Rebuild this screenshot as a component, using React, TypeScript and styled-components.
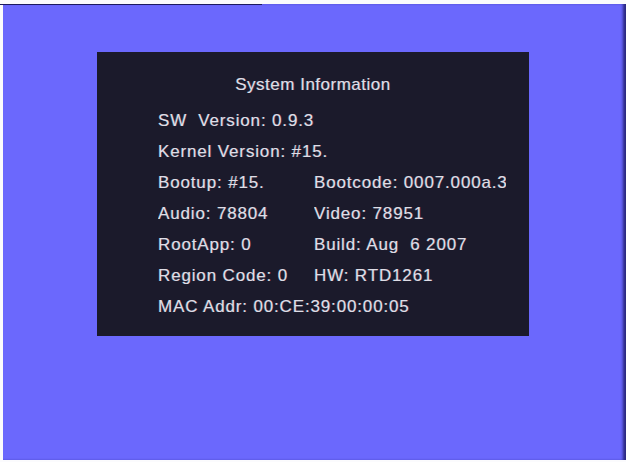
import React from "react";
import styled, { createGlobalStyle } from "styled-components";

const Global = createGlobalStyle`
  html, body { margin: 0; padding: 0; background: #fbfbfd; }
  body { width: 626px; height: 462px; overflow: hidden; }
`;

const Page = styled.div`
  width: 626px;
  height: 462px;
  box-sizing: border-box;
  padding: 4px 0 2px 3px;
  background: #fbfbfd;
`;

const Screen = styled.div`
  position: relative;
  height: 100%;
  box-sizing: border-box;
  background: #6b68fd;
  padding: 48px 0 0 94px;
  box-shadow: inset -4px 0 3px -1px #2a2880;
  &::before {
    content: "";
    position: absolute;
    left: -3px;
    top: 0;
    width: 262px;
    height: 1px;
    background: #1c1a60;
  }
`;

const Panel = styled.div`
  width: 432px;
  height: 284px;
  box-sizing: border-box;
  background: #1b1a2b;
  padding: 17px 0 0 61px;
  display: flex;
  flex-direction: column;
  font-family: "Liberation Sans", Arial, sans-serif;
  font-size: 17px;
  letter-spacing: 0.85px;
  color: #dedde6;
  text-shadow: 0.6px 0 0 rgba(255, 120, 200, 0.35), -0.6px 0 0 rgba(120, 255, 200, 0.3);
`;

const Title = styled.div`
  height: 31px;
  line-height: 31px;
  margin: 0 0 5px -61px;
  text-align: center;
  white-space: nowrap;
  letter-spacing: 0.5px;
`;

const Row = styled.div`
  display: grid;
  grid-template-columns: 156px 192px;
  height: 31px;
  line-height: 31px;
  white-space: pre;
`;

const Cell = styled.span<{ $wide?: boolean }>`
  overflow: ${(p) => (p.$wide ? "visible" : "hidden")};
  grid-column: ${(p) => (p.$wide ? "1 / span 2" : "auto")};
  white-space: pre;
`;

const rows: [string, string?][] = [
  ["SW  Version: 0.9.3"],
  ["Kernel Version: #15."],
  ["Bootup: #15.", "Bootcode: 0007.000a.3"],
  ["Audio: 78804", "Video: 78951"],
  ["RootApp: 0", "Build: Aug  6 2007"],
  ["Region Code: 0", "HW: RTD1261"],
  ["MAC Addr: 00:CE:39:00:00:05"],
];

export default function App() {
  return (
    <>
      <Global />
      <Page>
        <Screen>
          <Panel>
            <Title>System Information</Title>
            {rows.map(([a, b], i) => (
              <Row key={i}>
                {b === undefined ? (
                  <Cell $wide>{a}</Cell>
                ) : (
                  <>
                    <Cell>{a}</Cell>
                    <Cell>{b}</Cell>
                  </>
                )}
              </Row>
            ))}
          </Panel>
        </Screen>
      </Page>
    </>
  );
}
